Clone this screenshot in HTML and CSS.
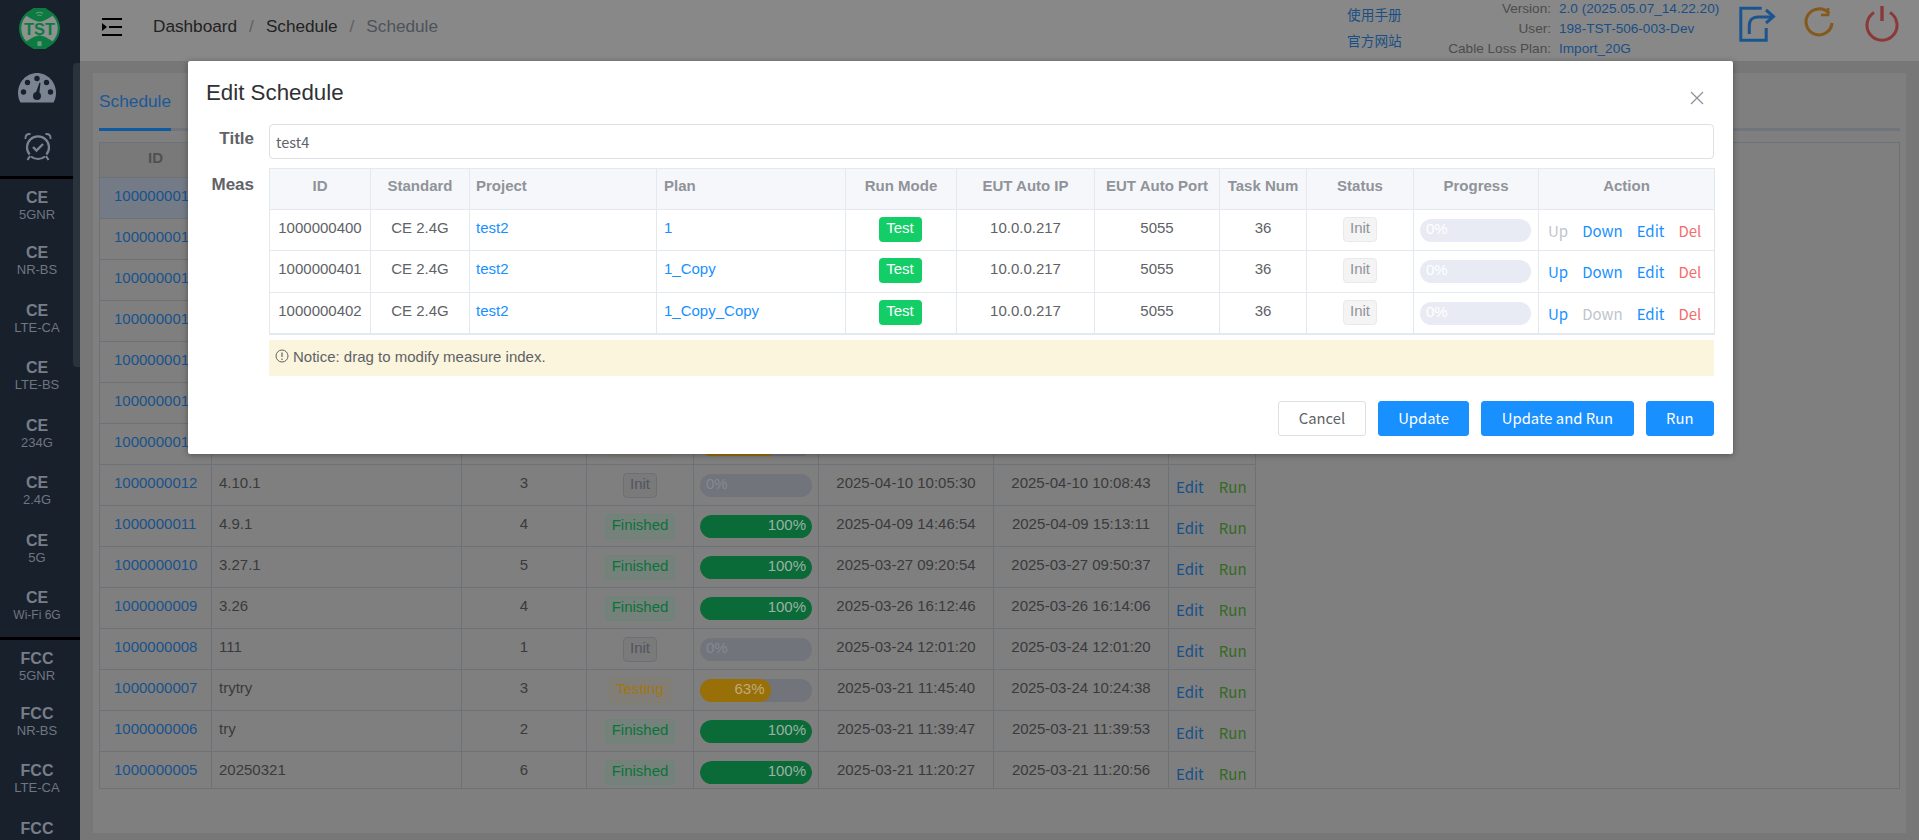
FILE: index.html
```html
<!DOCTYPE html>
<html lang="en">
<head>
<meta charset="utf-8">
<title>Schedule</title>
<link rel="stylesheet" href="styles.css">
</head>
<body>
<div class="app">
  <aside class="sidebar">
    <div class="logo-wrap">
      <svg class="logo" viewBox="0 0 40 40" width="41" height="41">
        <circle cx="20" cy="20" r="20" fill="#0c7a41"/>
        <circle cx="20" cy="20" r="17.800" fill="#8c938f"/>
        <path d="M6 6.500Q13 12 20 13.500Q27 12 34 6.500L26 0H14Z" fill="#0c7a41"/>
        <path d="M6 33.500Q13 28 20 26.500Q27 28 34 33.500L26 40H14Z" fill="#0c7a41"/>
        <path d="M16.500 5.500q3.500-2.600 7 0M18 7.500q2-1.500 4 0" stroke="#6f9a82" stroke-width="1" fill="none"/>
        <rect x="18" y="32.500" width="4" height="4.500" fill="#6f9a82"/>
        <text x="20" y="26.500" class="logo-text" text-anchor="middle">TST</text>
      </svg>
    </div>
    <div class="nav-icon nav-gauge">
      <svg viewBox="0 0 38 30" width="38" height="30">
        <path fill-rule="evenodd" fill="#7a8392" d="M2.500 29.500C.5 26 0 23 0 20 0 9 8.500 0 19 0s19 9 19 20c0 3-.6 6-2.500 9.500Z"/>
        <g fill="#18202c">
          <circle cx="19" cy="5.500" r="2.700"/><circle cx="9.500" cy="9.500" r="2.700"/><circle cx="28.500" cy="9.500" r="2.700"/><circle cx="5.500" cy="19" r="2.700"/><circle cx="32.500" cy="19" r="2.700"/>
          <circle cx="19" cy="23" r="4"/><path d="M17 22 L21.500 9.500 L22.500 10 L21 23Z"/>
        </g>
      </svg>
    </div>
    <div class="nav-icon nav-alarm">
      <svg viewBox="0 0 28 29" width="28" height="29" fill="none" stroke="#7a8392" stroke-width="2.200">
        <path d="M5.600 22.500A11 11 0 1 1 22.400 22.500"/>
        <path d="M7 24.500A11 11 0 0 0 21 24.500"/>
        <path d="M1.500 7C1 3.500 3 1.500 6.500 2M26.500 7C27 3.500 25 1.500 21.500 2" stroke-width="2"/>
        <path d="M6 24 3.500 28M22 24 24.500 28" stroke-width="2"/>
        <path d="M9 15l3.500 3.500 6.500-6.500" stroke-width="2.400"/>
      </svg>
    </div>
    <div class="divider"></div>
    <a class="nav-item first"><b>CE</b><span>5GNR</span></a>
    <a class="nav-item"><b>CE</b><span>NR-BS</span></a>
    <a class="nav-item"><b>CE</b><span>LTE-CA</span></a>
    <a class="nav-item"><b>CE</b><span>LTE-BS</span></a>
    <a class="nav-item"><b>CE</b><span>234G</span></a>
    <a class="nav-item"><b>CE</b><span>2.4G</span></a>
    <a class="nav-item"><b>CE</b><span>5G</span></a>
    <a class="nav-item"><b>CE</b><span class="narrow">Wi-Fi 6G</span></a>
    <div class="divider"></div>
    <a class="nav-item first"><b>FCC</b><span>5GNR</span></a>
    <a class="nav-item"><b>FCC</b><span>NR-BS</span></a>
    <a class="nav-item"><b>FCC</b><span>LTE-CA</span></a>
    <a class="nav-item"><b>FCC</b><span>LTE-BS</span></a>
    <div class="scroll-thumb"></div>
  </aside>
  <div class="main">
    <header class="topbar">
      <svg class="hamburger" viewBox="0 0 20 18" width="20" height="18">
        <path d="M0 1h20M7 9h13M0 17h20" stroke="#000" stroke-width="2"/>
        <path d="M0 5v8l5-4Z" fill="#000"/>
      </svg>
      <nav class="crumbs">
        <span>Dashboard</span><i>/</i><span>Schedule</span><i>/</i><span class="last">Schedule</span>
      </nav>
      <div class="links">
        <a>使用手册</a>
        <a>官方网站</a>
      </div>
      <dl class="info">
        <dt>Version:</dt><dd>2.0 (2025.05.07_14.22.20)</dd>
        <dt>User:</dt><dd>198-TST-506-003-Dev</dd>
        <dt>Cable Loss Plan:</dt><dd>Import_20G</dd>
      </dl>
      <svg class="tool tool-share" viewBox="7 4 40 40" width="40" height="40" fill="none" stroke="#1b558f" stroke-width="3">
        <path d="M31.700 8.200H10.800V40.200H36.200V28"/>
        <path d="M19.300 34V25.500C19.300 20 23 17 27.500 17H43"/>
        <path d="M36 10L43.500 16.500L36 23"/>
      </svg>
      <svg class="tool tool-refresh" viewBox="0 0 32 32" width="32" height="32" fill="none" stroke="#84591b" stroke-width="3">
        <path d="M26 6.500A13 13 0 1 0 29 16"/>
        <path d="M25 1V8H18" stroke-width="2.600"/>
      </svg>
      <svg class="tool tool-power" viewBox="0 0 34 36" width="34" height="36" fill="none" stroke="#8a3838" stroke-width="3">
        <path d="M9 6.500A15 15 0 1 0 25 6.500"/>
        <path d="M17 0V15" stroke-width="3.400"/>
      </svg>
    </header>
    <main class="content">
      <section class="card">
        <div class="tabs"><span class="tab">Schedule</span></div>
        <div class="table-wrap">
          <table class="bg-table">
            <colgroup><col class="c1"><col class="c2"><col class="c3"><col class="c4"><col class="c5"><col class="c6"><col class="c7"><col class="c8"></colgroup>
            <thead><tr><th>ID</th><th>Title</th><th>Meas</th><th>Status</th><th>Progress</th><th>Start Time</th><th>End Time</th><th>Action</th></tr></thead>
            <tbody>
              <tr class="current"><td class="id">1000000019</td><td>5.7.1</td><td class="ctr">3</td><td class="ctr"><span class="tag ok">Finished</span></td><td><div class="bar"><div class="fill green" style="width:100%">100%</div></div></td><td class="ctr">2025-05-07 10:00:00</td><td class="ctr">2025-05-07 10:20:00</td><td class="act"><a class="e">Edit</a><a class="r">Run</a></td></tr>
              <tr><td class="id">1000000018</td><td>test4</td><td class="ctr">3</td><td class="ctr"><span class="tag ok">Finished</span></td><td><div class="bar"><div class="fill green" style="width:100%">100%</div></div></td><td class="ctr">2025-05-06 10:00:00</td><td class="ctr">2025-05-06 10:20:00</td><td class="act"><a class="e">Edit</a><a class="r">Run</a></td></tr>
              <tr><td class="id">1000000017</td><td>test3</td><td class="ctr">3</td><td class="ctr"><span class="tag ok">Finished</span></td><td><div class="bar"><div class="fill green" style="width:100%">100%</div></div></td><td class="ctr">2025-05-05 10:00:00</td><td class="ctr">2025-05-05 10:20:00</td><td class="act"><a class="e">Edit</a><a class="r">Run</a></td></tr>
              <tr><td class="id">1000000016</td><td>test2</td><td class="ctr">3</td><td class="ctr"><span class="tag ok">Finished</span></td><td><div class="bar"><div class="fill green" style="width:100%">100%</div></div></td><td class="ctr">2025-05-04 10:00:00</td><td class="ctr">2025-05-04 10:20:00</td><td class="act"><a class="e">Edit</a><a class="r">Run</a></td></tr>
              <tr><td class="id">1000000015</td><td>test1</td><td class="ctr">3</td><td class="ctr"><span class="tag ok">Finished</span></td><td><div class="bar"><div class="fill green" style="width:100%">100%</div></div></td><td class="ctr">2025-05-03 10:00:00</td><td class="ctr">2025-05-03 10:20:00</td><td class="act"><a class="e">Edit</a><a class="r">Run</a></td></tr>
              <tr><td class="id">1000000014</td><td>test</td><td class="ctr">3</td><td class="ctr"><span class="tag ok">Finished</span></td><td><div class="bar"><div class="fill green" style="width:100%">100%</div></div></td><td class="ctr">2025-05-02 10:00:00</td><td class="ctr">2025-05-02 10:20:00</td><td class="act"><a class="e">Edit</a><a class="r">Run</a></td></tr>
              <tr><td class="id">1000000013</td><td>4.11.1</td><td class="ctr">3</td><td class="ctr"><span class="tag warn">Testing</span></td><td><div class="bar"><div class="fill orange" style="width:70%">70%</div></div></td><td class="ctr">2025-04-11 10:00:00</td><td class="ctr">2025-04-11 10:20:00</td><td class="act"><a class="e">Edit</a><a class="r">Run</a></td></tr>
              <tr><td class="id">1000000012</td><td>4.10.1</td><td class="ctr">3</td><td class="ctr"><span class="tag idle">Init</span></td><td><div class="bar"><div class="fill empty">0%</div></div></td><td class="ctr">2025-04-10 10:05:30</td><td class="ctr">2025-04-10 10:08:43</td><td class="act"><a class="e">Edit</a><a class="r">Run</a></td></tr>
              <tr><td class="id">1000000011</td><td>4.9.1</td><td class="ctr">4</td><td class="ctr"><span class="tag ok">Finished</span></td><td><div class="bar"><div class="fill green" style="width:100%">100%</div></div></td><td class="ctr">2025-04-09 14:46:54</td><td class="ctr">2025-04-09 15:13:11</td><td class="act"><a class="e">Edit</a><a class="r">Run</a></td></tr>
              <tr><td class="id">1000000010</td><td>3.27.1</td><td class="ctr">5</td><td class="ctr"><span class="tag ok">Finished</span></td><td><div class="bar"><div class="fill green" style="width:100%">100%</div></div></td><td class="ctr">2025-03-27 09:20:54</td><td class="ctr">2025-03-27 09:50:37</td><td class="act"><a class="e">Edit</a><a class="r">Run</a></td></tr>
              <tr><td class="id">1000000009</td><td>3.26</td><td class="ctr">4</td><td class="ctr"><span class="tag ok">Finished</span></td><td><div class="bar"><div class="fill green" style="width:100%">100%</div></div></td><td class="ctr">2025-03-26 16:12:46</td><td class="ctr">2025-03-26 16:14:06</td><td class="act"><a class="e">Edit</a><a class="r">Run</a></td></tr>
              <tr><td class="id">1000000008</td><td>111</td><td class="ctr">1</td><td class="ctr"><span class="tag idle">Init</span></td><td><div class="bar"><div class="fill empty">0%</div></div></td><td class="ctr">2025-03-24 12:01:20</td><td class="ctr">2025-03-24 12:01:20</td><td class="act"><a class="e">Edit</a><a class="r">Run</a></td></tr>
              <tr><td class="id">1000000007</td><td>trytry</td><td class="ctr">3</td><td class="ctr"><span class="tag warn">Testing</span></td><td><div class="bar"><div class="fill orange" style="width:63%">63%</div></div></td><td class="ctr">2025-03-21 11:45:40</td><td class="ctr">2025-03-24 10:24:38</td><td class="act"><a class="e">Edit</a><a class="r">Run</a></td></tr>
              <tr><td class="id">1000000006</td><td>try</td><td class="ctr">2</td><td class="ctr"><span class="tag ok">Finished</span></td><td><div class="bar"><div class="fill green" style="width:100%">100%</div></div></td><td class="ctr">2025-03-21 11:39:47</td><td class="ctr">2025-03-21 11:39:53</td><td class="act"><a class="e">Edit</a><a class="r">Run</a></td></tr>
              <tr><td class="id">1000000005</td><td>20250321</td><td class="ctr">6</td><td class="ctr"><span class="tag ok">Finished</span></td><td><div class="bar"><div class="fill green" style="width:100%">100%</div></div></td><td class="ctr">2025-03-21 11:20:27</td><td class="ctr">2025-03-21 11:20:56</td><td class="act"><a class="e">Edit</a><a class="r">Run</a></td></tr>
            </tbody>
          </table>
        </div>
      </section>
    </main>
  </div>
  <div class="modal">
    <div class="modal-head">
      <h2>Edit Schedule</h2>
      <svg class="close" viewBox="0 0 14 14" width="14" height="14"><path d="M1 1l12 12M13 1L1 13" stroke="#8a9099" stroke-width="1.200" fill="none"/></svg>
    </div>
    <div class="form">
      <label class="lbl lbl-title">Title</label>
      <div class="input">test4</div>
      <label class="lbl lbl-meas">Meas</label>
      <div class="meas">
        <table class="m-table">
          <colgroup><col class="m1"><col class="m2"><col class="m3"><col class="m4"><col class="m5"><col class="m6"><col class="m7"><col class="m8"><col class="m9"><col class="m10"><col class="m11"></colgroup>
          <thead><tr><th>ID</th><th>Standard</th><th class="lft">Project</th><th class="lft plan">Plan</th><th>Run Mode</th><th>EUT Auto IP</th><th>EUT Auto Port</th><th>Task Num</th><th>Status</th><th>Progress</th><th>Action</th></tr></thead>
          <tbody>
            <tr><td>1000000400</td><td>CE 2.4G</td><td class="lft"><a class="lnk">test2</a></td><td class="lft plan"><a class="lnk">1</a></td><td><span class="mode">Test</span></td><td>10.0.0.217</td><td>5055</td><td>36</td><td><span class="init">Init</span></td><td><div class="m-bar">0%</div></td><td class="ops"><a class="off">Up</a><a>Down</a><a>Edit</a><a class="del">Del</a></td></tr>
            <tr class="tall"><td>1000000401</td><td>CE 2.4G</td><td class="lft"><a class="lnk">test2</a></td><td class="lft plan"><a class="lnk">1_Copy</a></td><td><span class="mode">Test</span></td><td>10.0.0.217</td><td>5055</td><td>36</td><td><span class="init">Init</span></td><td><div class="m-bar">0%</div></td><td class="ops"><a>Up</a><a>Down</a><a>Edit</a><a class="del">Del</a></td></tr>
            <tr><td>1000000402</td><td>CE 2.4G</td><td class="lft"><a class="lnk">test2</a></td><td class="lft plan"><a class="lnk">1_Copy_Copy</a></td><td><span class="mode">Test</span></td><td>10.0.0.217</td><td>5055</td><td>36</td><td><span class="init">Init</span></td><td><div class="m-bar">0%</div></td><td class="ops"><a>Up</a><a class="off">Down</a><a>Edit</a><a class="del">Del</a></td></tr>
          </tbody>
        </table>
        <div class="notice">
          <svg viewBox="0 0 14 14" width="14" height="14" fill="none" stroke="#606266"><circle cx="7" cy="7" r="6"/><path d="M7 3.500v4.500M7 9.500v1.500" stroke-width="1.200"/></svg>
          <span>Notice: drag to modify measure index.</span>
        </div>
      </div>
    </div>
    <div class="footer">
      <button class="btn plain">Cancel</button>
      <button class="btn">Update</button>
      <button class="btn">Update and Run</button>
      <button class="btn">Run</button>
    </div>
  </div>
</div>
</body>
</html>
```
FILE: styles.css
```css
* { box-sizing: border-box; }
html, body { margin: 0; height: 100%; overflow: hidden; }
body { font-family: "Liberation Sans", Arial, sans-serif; font-size: 15px; color: #3a3a3c; background: #777; }
a { text-decoration: none; }

.app { display: flex; width: 1919px; height: 840px; overflow: hidden; position: relative; }

/* sidebar */
.sidebar { width: 80px; flex: none; height: 840px; background: #18202c; overflow: hidden; position: relative; display: flex; flex-direction: column; }
.logo-wrap { height: 61px; flex: none; padding: 8px 0 0 19px; }
.logo { display: block; }
.logo-text { font: bold 16px "Liberation Sans", sans-serif; fill: #0c7a41; }
.nav-icon { flex: none; display: flex; }
.nav-gauge { height: 61px; padding: 12px 0 0 18px; }
.nav-alarm { height: 54px; padding: 10px 0 0 24px; }
.divider { flex: none; height: 3px; background: #000; }
.nav-item { flex: none; height: 57.500px; padding-top: 10px; display: flex; flex-direction: column; align-items: center; padding-right: 6px; color: #6f7681; }
.nav-item.first { height: 55px; }
.nav-item b { font-size: 16px; line-height: 18px; color: #777e89; }
.nav-item span { font-size: 13px; line-height: 16px; }
.nav-item .narrow { font-size: 12px; }
.scroll-thumb { position: absolute; left: 73px; top: 63px; width: 7px; height: 304px; background: #2a323c; border-radius: 4px 0 0 4px; }

/* header */
.main { flex: 1; min-width: 0; display: flex; flex-direction: column; }
.topbar { height: 61px; flex: none; background: #888; display: flex; position: relative; }
.hamburger { margin: 18px 0 0 22px; flex: none; }
.crumbs { margin: 16px 0 0 31px; font-size: 17.200px; line-height: 20px; color: #222; display: flex; width: 1100px; flex: none; }
.crumbs i { font-style: normal; color: #606060; margin: 0 10px; padding: 0 2px; }
.crumbs .last { color: #4e525a; }
.links { position: absolute; left: 1267px; top: 5px; display: flex; flex-direction: column; gap: 7px; font-family: "Noto Sans CJK SC", sans-serif; font-size: 13.700px; }
.links a { color: #1a4f85; line-height: 19px; }
.info { position: absolute; left: 1340px; top: -1px; margin: 0; display: grid; grid-template-columns: 131px auto; column-gap: 8px; font-size: 13.600px; line-height: 20px; }
.info dt { text-align: right; color: #4c4c4c; }
.info dd { margin: 0; color: #1a4f85; }
.tool { position: absolute; display: block; }
.tool-share { left: 1657px; top: 4px; }
.tool-refresh { left: 1723px; top: 7px; }
.tool-power { left: 1785px; top: 6px; }

/* content */
.content { flex: 1; padding: 12px 13px 7px 13px; background: #777; min-height: 0; display: flex; }
.card { flex: 1; background: #7f7f7f; padding: 0 6px 44px; display: flex; flex-direction: column; min-width: 0; }
.tabs { height: 58px; flex: none; border-bottom: 3px solid #70747c; position: relative; margin-bottom: 11px; }
.tab { position: absolute; left: 0; bottom: -3px; height: 58px; line-height: 57px; font-size: 17.300px; color: #1c5896; border-bottom: 3px solid #0f5aa0; }
.table-wrap { flex: 1; min-height: 0; overflow: hidden; border-top: 1px solid #6d7279; border-right: 1px solid #6d7279; border-bottom: 1px solid #6d7279; }
.bg-table { border-collapse: separate; border-spacing: 0; table-layout: fixed; width: 1157px; border-left: 1px solid #6d7279; }
.c1 { width: 112px; } .c2 { width: 250px; } .c3 { width: 125px; } .c4 { width: 107px; } .c5 { width: 125px; } .c6 { width: 175px; } .c7 { width: 175px; } .c8 { width: 87px; }
.bg-table th, .bg-table td { border-right: 1px solid #6d7279; border-bottom: 1px solid #6d7279; padding: 7px 7px 0; height: 41px; line-height: 21px; vertical-align: top; white-space: nowrap; overflow: hidden; font-weight: normal; }
.bg-table th { height: 35px; padding-top: 4px; font-weight: bold; background: #797979; color: #4f5053; text-align: center; }
.bg-table .ctr { text-align: center; }
.bg-table .id { color: #18528c; padding-left: 14px; }
.bg-table .current td { background: #747b86; }
.tag { display: inline-block; height: 25px; padding: 0 6px; line-height: 19px; border-radius: 4px; border: 1px solid; margin-top: 1px; font-size: 15px; }
.tag.ok { background: #75827b; border-color: #6b8677; color: #0a733a; }
.tag.warn { background: #807e77; border-color: #837e6c; color: #a07610; }
.tag.idle { background: #7a7a7b; border-color: #6d6f72; color: #50555b; }
.bar { height: 23px; margin: 2px -1px 0; border-radius: 12px; background: #72747c; overflow: hidden; }
.fill { height: 100%; border-radius: 12px; text-align: right; padding: 0 6px; line-height: 20px; font-size: 15px; color: #9fb0a6; }
.fill.green { background: #0a6b38; }
.fill.orange { background: #997007; color: #c0aa7d; }
.fill.empty { background: none; text-align: left; color: #858890; }
.act { padding-left: 7px !important; padding-top: 11px !important; }
.act a { font: 15px/21px "Noto Sans CJK SC", sans-serif; margin-right: 15px; }
.act .e { color: #155089; }
.act .r { color: #356a25; margin-right: 0; }

/* dialog */
.modal { position: absolute; left: 188px; top: 61px; width: 1545px; height: 393px; background: #fff; border-radius: 2px; box-shadow: 0 1px 6px rgba(0,0,0,.35); padding: 0 19px; z-index: 5; display: flex; flex-direction: column; }
.modal-head { height: 63px; flex: none; display: flex; justify-content: space-between; }
.modal-head h2 { margin: 17px 0 0 -1px; font-size: 22.300px; line-height: 30px; font-weight: normal; color: #303133; }
.close { margin: 30px 10px 0 0; }
.form { display: grid; grid-template-columns: 47px 1fr; column-gap: 15px; row-gap: 9px; }
.lbl { justify-self: end; font-size: 17px; font-weight: bold; color: #606266; line-height: 20px; }
.lbl-title { padding-top: 5px; }
.lbl-meas { padding-top: 7px; }
.input { height: 35px; border: 1px solid #dcdfe6; border-radius: 4px; padding: 0 6px; font: 14.500px/33px "Noto Sans CJK SC", sans-serif; color: #606266; }
.meas { min-width: 0; }
.m-table { width: 1445px; border-collapse: separate; border-spacing: 0; table-layout: fixed; border: 1px solid #e4e9f0; border-right: 1px solid #dfe6ec; border-bottom-width: 2px; }
.m1 { width: 101px; } .m2 { width: 99px; } .m3 { width: 187px; } .m4 { width: 189px; } .m5 { width: 111px; } .m6 { width: 138px; } .m7 { width: 125px; } .m8 { width: 87px; } .m9 { width: 107px; } .m10 { width: 125px; } .m11 { width: 175px; }
.m-table th, .m-table td { border-right: 1px solid #e4e9f0; border-bottom: 1px solid #e4e9f0; height: 41px; text-align: center; vertical-align: top; padding: 7px 0 0; line-height: 21px; color: #606266; white-space: nowrap; }
.m-table th:last-child, .m-table td:last-child { border-right: 0; }
.m-table tbody tr:last-child td { border-bottom: 0; height: 40px; }
.m-table .tall td { height: 42px; }
.m-table th { background: #f5f7fa; color: #909399; font-weight: bold; height: 41px; padding-top: 6px; }
.m-table .lft { text-align: left; padding-left: 6px; }
.m-table .plan { padding-left: 7px; }
.lnk { color: #1890ff; }
.mode { display: inline-block; width: 43px; height: 25px; margin-left: -2px; background: #13ce66; border-radius: 4px; color: #fff; font-size: 15px; line-height: 21px; }
.init { display: inline-block; width: 34px; height: 25px; background: #f4f4f5; border: 1px solid #e9e9eb; border-radius: 4px; color: #909399; font-size: 15px; line-height: 19px; }
.m-bar { height: 23px; width: 111px; margin: 2px 0 0 6px; border-radius: 12px; background: #e8ebf4; text-align: left; padding-left: 6px; color: #fff; line-height: 19px; }
.ops { text-align: left !important; padding: 10px 0 0 9px !important; display: flex; gap: 14px; }
.ops a { font: 15px/21px "Noto Sans CJK SC", sans-serif; color: #1890ff; }
.ops .off { color: #c0c4cc; }
.ops .del { color: #f56c6c; }
.notice { height: 36px; margin-top: 5px; background: #fbf5dd; display: flex; align-items: center; gap: 4px; padding: 0 6px 4px; color: #606266; font-size: 15px; }
.footer { display: flex; justify-content: flex-end; gap: 12px; margin-top: 25px; }
.btn { height: 35px; padding: 0 19.500px; border: 1px solid #1890ff; border-radius: 3px; background: #1890ff; color: #fff; font: 14.800px/1 "Noto Sans CJK SC", sans-serif; }
.btn.plain { background: #fff; border-color: #dcdfe6; color: #606266; }
```
